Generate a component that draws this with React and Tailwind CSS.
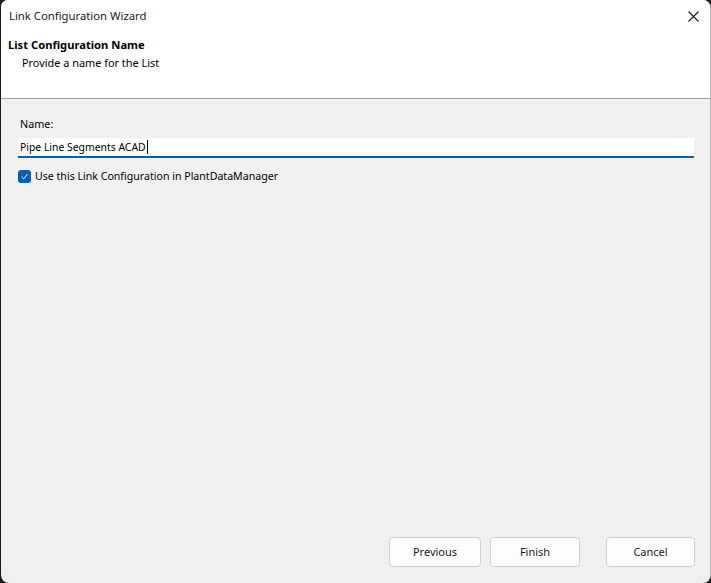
import React from "react";

export default function App() {
  const font = { fontFamily: '"Segoe UI", "Noto Sans", "Open Sans", sans-serif' };
  return (
    <div className="w-[711px] h-[583px] bg-[#1c1c1c] overflow-hidden" style={font}>
      <div className="w-[710px] h-[583px] ml-[1px] rounded-tl-[7px] rounded-tr-[8px] rounded-br-[8px] rounded-bl-[8px] bg-[#f0f0f0] border-r border-[#bdbdbd] overflow-hidden flex flex-col text-[12px] text-black">
        {/* title bar */}
        <div className="h-[32px] bg-white flex items-center justify-between shrink-0">
          <span className="pl-[8px] text-[11.3px] text-[#1a1a1a]">Link Configuration Wizard</span>
          <svg width="11" height="11" viewBox="0 0 11 11" className="mr-[11px]">
            <path d="M0.5 0.5 L10.5 10.5 M10.5 0.5 L0.5 10.5" stroke="#1a1a1a" strokeWidth="1.1" />
          </svg>
        </div>
        {/* header */}
        <div className="h-[67px] bg-white border-b border-[#a0a0a0] shrink-0 flex flex-col pt-[4px]">
          <div className="pl-[7px] font-bold leading-[17px] text-[11.2px]">List Configuration Name</div>
          <div className="pl-[21px] leading-[17px] mt-[1px] text-[10.9px]">Provide a name for the List</div>
        </div>
        {/* body */}
        <div className="flex-1 flex flex-col px-[17px] pt-[17px]">
          <div className="pl-[2px] leading-[16px] text-[10.8px]">Name:</div>
          <div className="mt-[6px] w-[676px] h-[20px] bg-white border-b-2 border-[#005fb8] flex items-center pl-[2px] leading-[16px] text-[10.4px]">
            <span>Pipe Line Segments ACAD</span>
            <span className="w-[1px] h-[14px] bg-black ml-[1px]" />
          </div>
          <div className="mt-[10px] flex items-center gap-[4px]">
            <div className="w-[13px] h-[13px] rounded-[3px] bg-[#005fb8] flex items-center justify-center">
              <svg width="9" height="9" viewBox="0 0 9 9">
                <path d="M1.5 4.8 L3.6 6.8 L7.6 2.2" stroke="white" strokeWidth="1" fill="none" />
              </svg>
            </div>
            <span className="leading-[16px] text-[10.6px]">Use this Link Configuration in PlantDataManager</span>
          </div>
          <div className="flex-1" />
          <div className="flex justify-end pb-[16px] mr-[-2px]">
            <button className="w-[92px] h-[30px] rounded-[4px] bg-[#fdfdfd] border border-[#d0d0d0] text-[11px] text-[#1a1a1a]">Previous</button>
            <button className="ml-[9px] w-[90px] h-[30px] rounded-[4px] bg-[#fdfdfd] border border-[#d0d0d0] text-[11px] text-[#1a1a1a]">Finish</button>
            <button className="ml-[26px] w-[89px] h-[30px] rounded-[4px] bg-[#fdfdfd] border border-[#d0d0d0] text-[11px] text-[#1a1a1a]">Cancel</button>
          </div>
        </div>
      </div>
    </div>
  );
}
